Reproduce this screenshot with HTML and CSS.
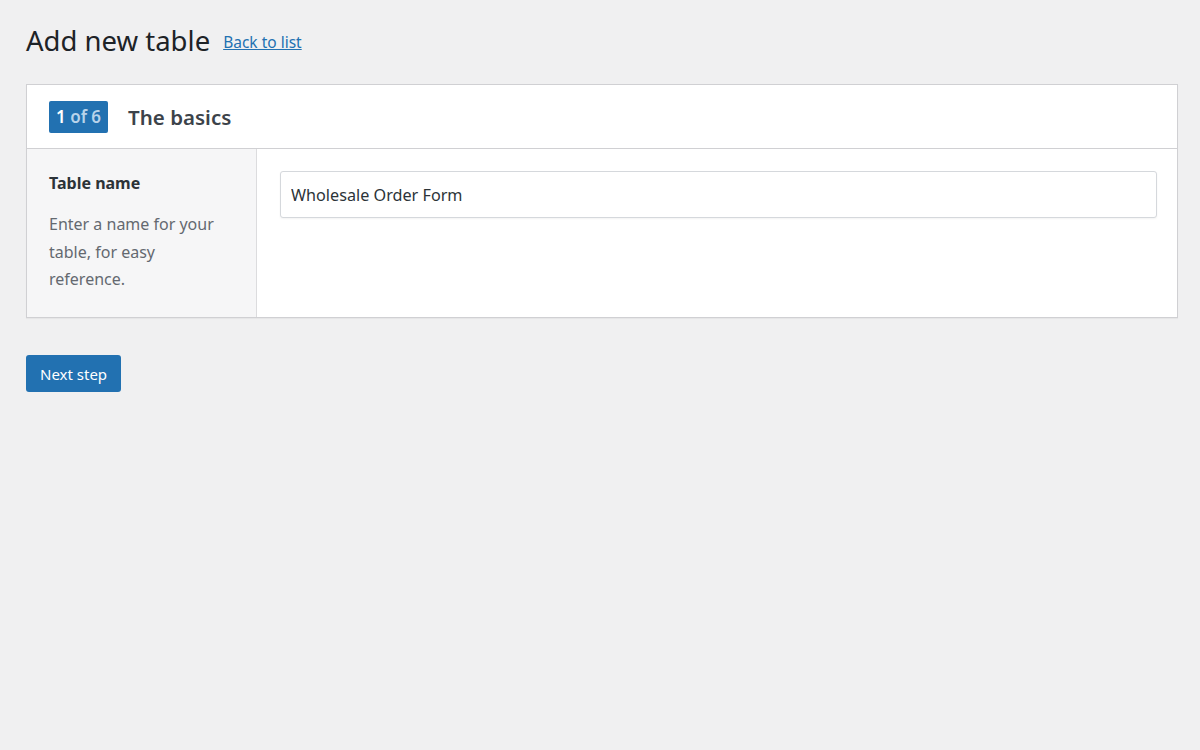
FILE: index.html
```html
<!DOCTYPE html>
<html lang="en">
<head>
<meta charset="UTF-8">
<title>Add new table</title>
<link rel="stylesheet" href="styles.css">
</head>
<body>
<div class="wrap">
    <div class="page-title">
        <h1>Add new table</h1>
        <a href="#" class="back-link">Back to list</a>
    </div>
    <div class="card">
        <div class="card-header">
            <span class="step"><b>1</b> of 6</span>
            <h2>The basics</h2>
        </div>
        <div class="card-body">
            <div class="field-label">
                <div class="label">Table name</div>
                <p class="desc">Enter a name for your table, for easy reference.</p>
            </div>
            <div class="field-input">
                <input type="text" value="Wholesale Order Form">
            </div>
        </div>
    </div>
    <button class="next">Next step</button>
</div>
</body>
</html>
```

FILE: styles.css
```css
body, html {
    margin: 0;
    height: 100%;
    background-color: #f0f0f1;
    font-family: "Noto Sans", "Open Sans", sans-serif;
    color: #1d2327;
}
.wrap {
    padding: 21px 22px 0 26px;
}
.page-title {
    display: flex;
    align-items: center;
    gap: 13px;
    height: 40px;
}
.page-title h1 {
    margin: 0;
    font-size: 27.5px;
    font-weight: 400;
    line-height: 40px;
}
.back-link {
    color: #2271b1;
    font-size: 15.5px;
    margin-top: 1px;
}
.card {
    margin-top: 23px;
    background: #fff;
    border: 1px solid #d0d0d3;
    box-shadow: 0 1px 1px rgba(0,0,0,0.04);
}
.card-header {
    display: flex;
    align-items: center;
    gap: 20px;
    height: 63px;
    padding: 0 22px;
    border-bottom: 1px solid #d0d0d3;
}
.step {
    background: #2271b1;
    color: #b8d3ea;
    font-size: 17px;
    font-weight: 600;
    padding: 0 7px;
    line-height: 32px;
    border-radius: 2px;
}
.step b {
    color: #fff;
    font-weight: 600;
}
.card-header h2 {
    margin: 0;
    font-size: 20.5px;
    font-weight: 600;
    color: #3c434a;
}
.card-body {
    display: flex;
    min-height: 168px;
}
.field-label {
    width: 177px;
    padding: 23px 30px 0 22px;
    background: #f6f6f7;
    border-right: 1px solid #dcdcde;
}
.label {
    font-size: 16px;
    font-weight: 700;
    line-height: 22px;
    color: #2c3338;
}
.desc {
    margin: 17px 0 0;
    font-size: 16px;
    line-height: 27.5px;
    color: #646970;
}
.field-input {
    flex: 1;
    padding: 22px 20px 0 23px;
}
.field-input input {
    box-sizing: border-box;
    width: 100%;
    height: 47px;
    padding: 0 10px;
    font-family: inherit;
    font-size: 16.2px;
    color: #2c3338;
    border: 1px solid #d5d8dc;
    border-radius: 3px;
    box-shadow: 0 1px 2px rgba(0,0,0,0.05);
}
.next {
    margin-top: 37px;
    background: #2271b1;
    color: #fff;
    border: none;
    border-radius: 3px;
    font-family: inherit;
    font-size: 15px;
    height: 37px;
    padding: 0 14px;
    cursor: pointer;
}
```
